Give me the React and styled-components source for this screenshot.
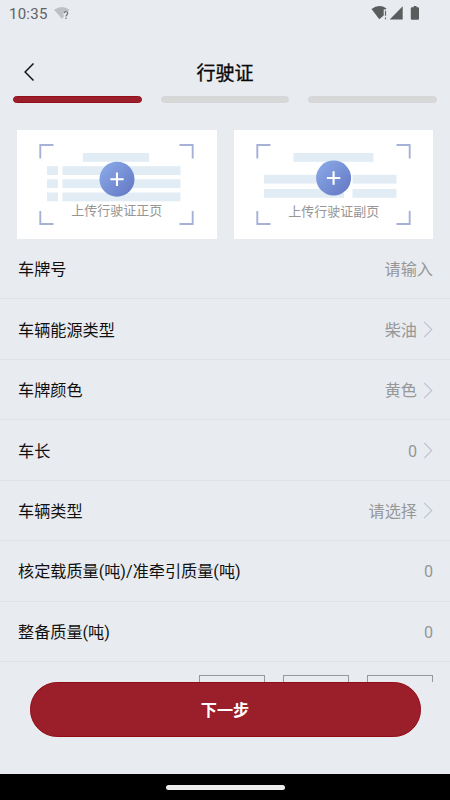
import React from "react";
import styled, { createGlobalStyle } from "styled-components";

const GlobalStyle = createGlobalStyle`
  * { box-sizing: border-box; }
  body { margin: 0; background: #e8ebf0; }
  button { font: inherit; border: 0; padding: 0; background: none; }
`;

const Screen = styled.div`
  width: 450px;
  height: 800px;
  display: flex;
  flex-direction: column;
  overflow: hidden;
  background: #e8ebf0;
  color: #111;
  font-family: Roboto, "Noto Sans CJK SC", sans-serif;
`;

const StatusBar = styled.header`
  height: 45px;
  flex: none;
  display: flex;
  justify-content: space-between;
  align-items: flex-start;
  padding: 5px 30px 0 9px;
`;

const StatusGroup = styled.div`
  display: flex;
  align-items: center;
  height: 18px;
`;

const Clock = styled.span`
  font-size: 15px;
  line-height: 18px;
  letter-spacing: 0.25px;
  color: #606164;
  margin-right: 6px;
`;

const Icon = styled.svg`
  display: block;
  flex: none;
`;

const NavBar = styled.nav`
  height: 51px;
  flex: none;
  display: grid;
  grid-template-columns: 60px 1fr 60px;
  align-items: center;
  padding-top: 3px;
`;

const BackButton = styled.button`
  padding-left: 23px;
`;

const Title = styled.h1`
  margin: 0;
  padding-top: 3px;
  text-align: center;
  font-size: 19px;
  line-height: 28px;
  font-weight: 400;
  -webkit-text-stroke: 0.35px #080808;
  color: #080808;
`;

const Steps = styled.div`
  flex: none;
  display: grid;
  grid-template-columns: repeat(3, 1fr);
  gap: 19px;
  padding: 0 13.4px;
`;

const Step = styled.div`
  height: 7px;
  border-radius: 4px;
  background: ${(p) => (p.$active ? "#9b1f2a" : "#d7d7d7")};
  border: 1px solid ${(p) => (p.$active ? "#93101b" : "#d5d6d8")};
`;

const Uploads = styled.section`
  flex: none;
  display: grid;
  grid-template-columns: repeat(2, 1fr);
  gap: 17px;
  padding: 26.5px 17.4px 0;
`;

const UploadCard = styled.button`
  height: 109.5px;
  background: #fff;
`;

const CardLabel = styled.text`
  font-size: 13px;
  fill: #969696;
`;

const Form = styled.main`
  flex: none;
  height: 443px;
  overflow: hidden;
`;

const Row = styled.div`
  height: 60.45px;
  display: flex;
  align-items: center;
  justify-content: space-between;
  padding: 3px 17px 0 18px;
  border-bottom: 1px solid #dee1e5;
  font-size: 16.15px;
  line-height: 24px;
`;

const Label = styled.span`
  white-space: nowrap;
`;

const Value = styled.span`
  display: flex;
  align-items: center;
  gap: 7px;
  color: #969799;
`;

const ChevronIcon = styled(Icon)`
  margin-bottom: 2px;
`;

const SizeOptions = styled.div`
  display: flex;
  justify-content: flex-end;
  gap: 18px;
  padding: 13px 17.5px 0;
`;

const SizeBox = styled.div`
  width: 66px;
  height: 30px;
  border: 1px solid #96989b;
`;

const Footer = styled.footer`
  flex: none;
  height: 92px;
  padding: 0 29.5px;
`;

const NextButton = styled.button`
  width: 100%;
  height: 54.5px;
  border-radius: 27.25px;
  background: #9b1f2a;
  border: 1px solid #920c15;
  color: #fff;
  font-size: 16.15px;
  font-weight: 700;
`;

const SystemBar = styled.div`
  flex: 1;
  display: flex;
  justify-content: center;
  align-items: center;
  background: #000;
`;

const HomeHandle = styled.div`
  width: 119px;
  height: 5px;
  border-radius: 3px;
  background: #ececec;
`;

const FRONT_BARS = [
  [66, 23, 66],
  [30, 36.2, 11], [45.5, 36.2, 118],
  [30, 49.3, 11], [45.5, 49.3, 118],
  [30, 62.5, 11], [45.5, 62.5, 118],
];

const BACK_BARS = [
  [59.5, 23, 80],
  [30, 44.8, 80], [118.5, 44.8, 44],
  [30, 59, 80], [118.5, 59, 44],
];

function LicenseArt({ bars, label, centerX, centerY, labelY, id }) {
  return (
    <Icon width="199.2" height="109.5" viewBox="0 0 199.2 109.5">
      <defs>
        <linearGradient id={id} x1="0" y1="0" x2="1" y2="1">
          <stop offset="0.08" stopColor="#89a8e7" />
          <stop offset="1" stopColor="#6275c1" />
        </linearGradient>
      </defs>
      {bars.map(([x, y, w]) => (
        <rect key={`${x}-${y}`} x={x} y={y} width={w} height="8.8" fill="#e1ecf5" />
      ))}
      <path
        d="M23.3 28.5V15H36.5M162.5 15H175.7V28.5M175.7 81V94H162.5M36.5 94H23.3V81"
        fill="none"
        stroke="#a6b1d7"
        strokeWidth="1.9"
      />
      <circle cx={centerX} cy={centerY} r="17.5" fill={`url(#${id})`} />
      <path
        d={`M${centerX - 6.7} ${centerY}h13.4M${centerX} ${centerY - 6.7}v13.4`}
        stroke="#fff"
        strokeWidth="2.1"
      />
      <CardLabel x="99.8" y={labelY} textAnchor="middle">{label}</CardLabel>
    </Icon>
  );
}

function Chevron() {
  return (
    <ChevronIcon width="9" height="17" viewBox="0 0 9 17">
      <path d="M0.3 1L7.8 8.5L0.3 16" fill="none" stroke="#bfc2d3" strokeWidth="1.1" />
    </ChevronIcon>
  );
}

const ROWS = [
  { label: "车牌号", value: "请输入" },
  { label: "车辆能源类型", value: "柴油", picker: true },
  { label: "车牌颜色", value: "黄色", picker: true },
  { label: "车长", value: "0", picker: true },
  { label: "车辆类型", value: "请选择", picker: true },
  { label: "核定载质量(吨)/准牵引质量(吨)", value: "0" },
  { label: "整备质量(吨)", value: "0" },
];

export default function App() {
  return (
    <Screen>
      <GlobalStyle />
      <StatusBar>
        <StatusGroup>
          <Clock>10:35</Clock>
          <Icon width="17" height="16" viewBox="0 0 17 16">
            <path d="M0 3.8Q8 -1.8 15.5 3.8L14 5.2Q9.7 4.6 9.3 8.2L10 10.3L8 13Z" fill="#bec0c3" />
            <path d="M10.2 7.2Q10.4 5.7 12 5.7T13.7 7.3C13.7 8.8 12 8.8 12 10.6M12 11.6v1.5" fill="none" stroke="#717377" strokeWidth="1.2" />
          </Icon>
        </StatusGroup>
        <StatusGroup>
          <Icon width="49" height="18" viewBox="0 0 49 18">
            <path d="M.5 4Q8 -1.7 15.5 3.5L14.5 4.6H12.7V10.5L8.3 14.2Z" fill="#5b5c5e" />
            <path d="M14.5 5.8v5M14.5 12.5v1.7" stroke="#67686a" strokeWidth="1.2" />
            <path d="M18.7 14.5L31.7 1.3V14.5Z" fill="#5b5c5e" />
            <path d="M41 2.3H42.7V1H45.5V2.3H47.2Q48 2.3 48 3.3V13.8Q48 14.8 47 14.8H40.9Q39.8 14.8 39.8 13.8V3.3Q39.8 2.3 41 2.3Z" fill="#5b5c5e" />
          </Icon>
        </StatusGroup>
      </StatusBar>
      <NavBar>
        <BackButton aria-label="返回">
          <Icon width="12" height="20" viewBox="0 0 12 20">
            <path d="M10.5 1.5L2.1 10L10.5 18.5" fill="none" stroke="#151618" strokeWidth="1.5" />
          </Icon>
        </BackButton>
        <Title>行驶证</Title>
      </NavBar>
      <Steps>
        <Step $active />
        <Step />
        <Step />
      </Steps>
      <Uploads>
        <UploadCard>
          <LicenseArt id="front" bars={FRONT_BARS} label="上传行驶证正页" centerX={100} centerY={49.2} labelY={85.5} />
        </UploadCard>
        <UploadCard>
          <LicenseArt id="back" bars={BACK_BARS} label="上传行驶证副页" centerX={99.6} centerY={48} labelY={86.5} />
        </UploadCard>
      </Uploads>
      <Form>
        {ROWS.map((row) => (
          <Row key={row.label}>
            <Label>{row.label}</Label>
            <Value>
              {row.value}
              {row.picker && <Chevron />}
            </Value>
          </Row>
        ))}
        <SizeOptions>
          <SizeBox />
          <SizeBox />
          <SizeBox />
        </SizeOptions>
      </Form>
      <Footer>
        <NextButton>下一步</NextButton>
      </Footer>
      <SystemBar>
        <HomeHandle />
      </SystemBar>
    </Screen>
  );
}
